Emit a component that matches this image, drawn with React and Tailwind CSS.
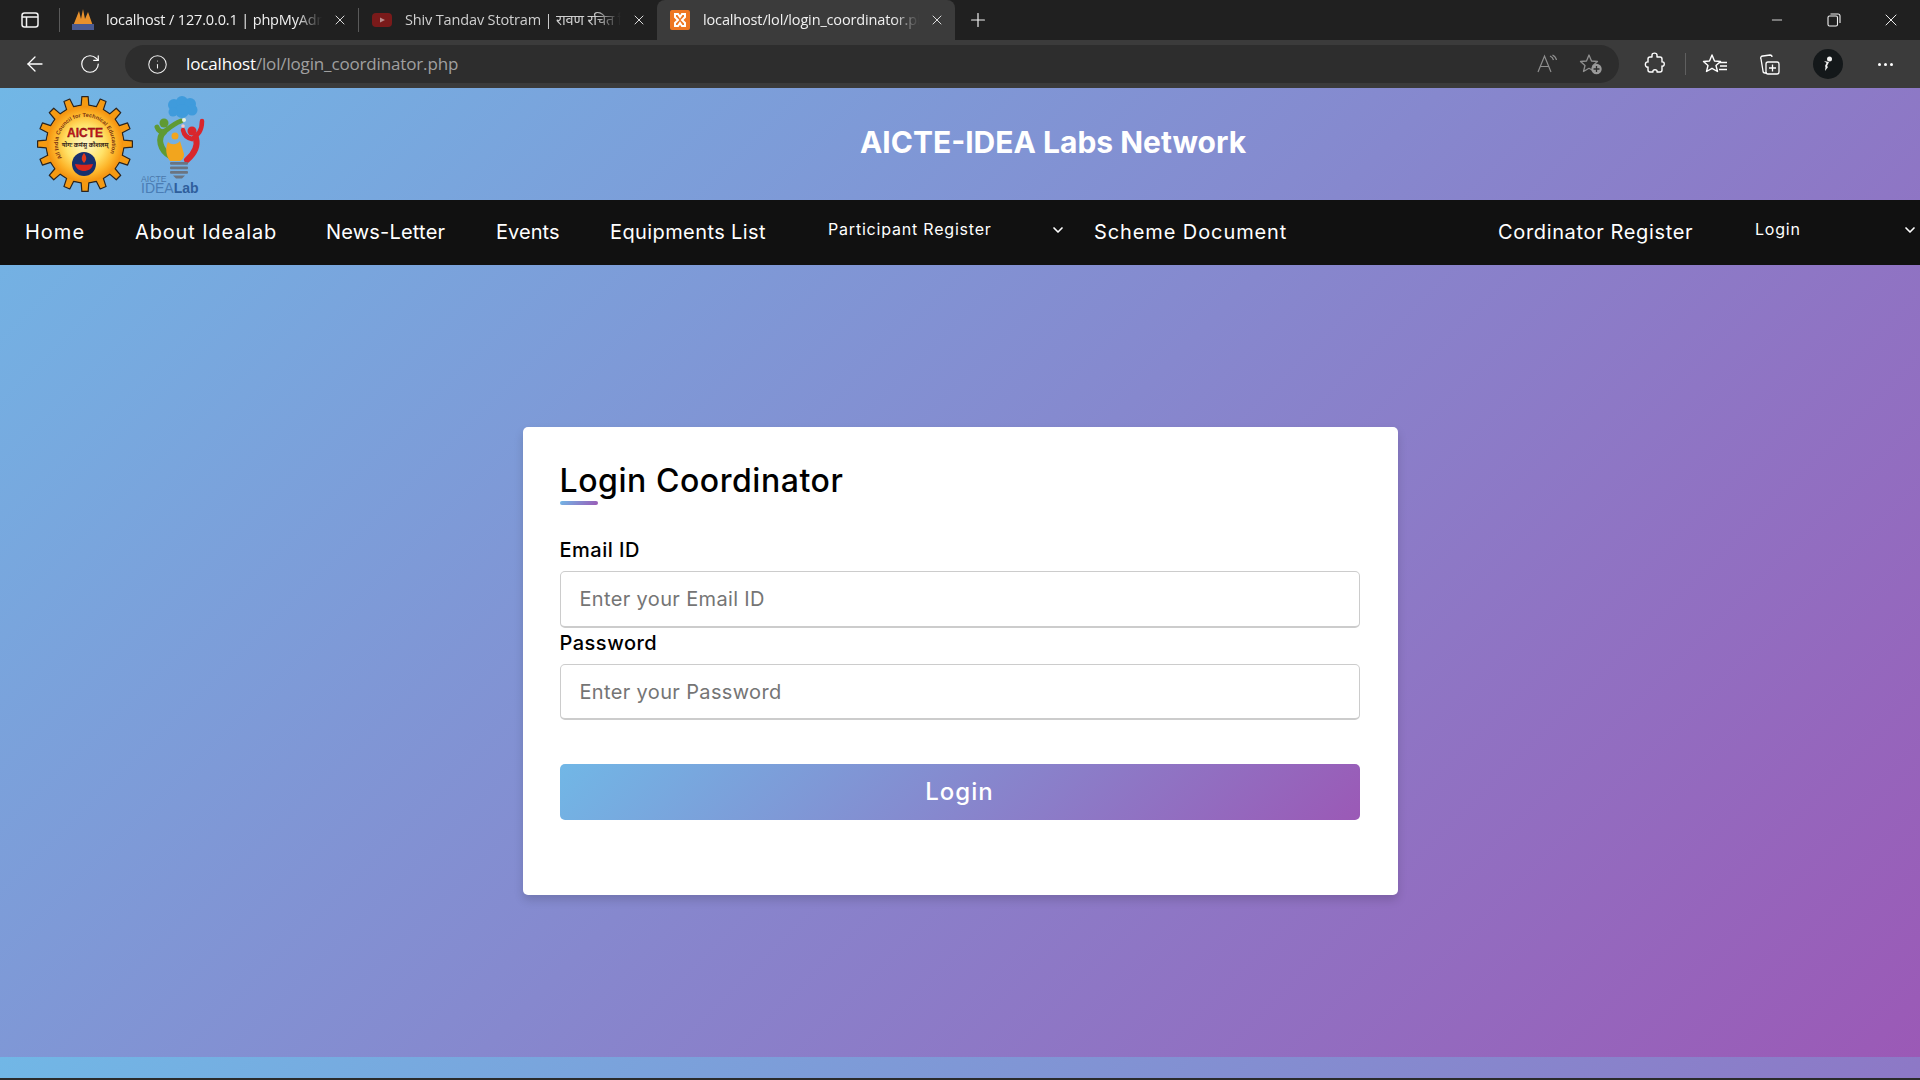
import { ArrowLeft, ChevronDown, Info, Minus, Plus, RotateCw, X } from "lucide-react";

const GRADIENT = "bg-[linear-gradient(135deg,#71b7e6,#9b59b6)]";
const BROWSER_FONT = "font-['Open_Sans','Noto_Sans',sans-serif]";

// gear outline used by the AICTE logo
function gearPath(cx, cy, outer, inner, teeth) {
  const step = (Math.PI * 2) / teeth;
  const pts = [];
  for (let i = 0; i < teeth; i++) {
    const a = i * step - Math.PI / 2;
    const w = step * 0.2;
    pts.push([a - w * 1.25, inner], [a - w * 0.85, outer], [a + w * 0.85, outer], [a + w * 1.25, inner]);
  }
  return (
    pts
      .map(([a, r], i) => `${i ? "L" : "M"}${(cx + Math.cos(a) * r).toFixed(2)} ${(cy + Math.sin(a) * r).toFixed(2)}`)
      .join(" ") + "Z"
  );
}

function AicteLogo() {
  return (
    <svg width="96" height="96" viewBox="0 0 96 96" className="shrink-0">
      <defs>
        <radialGradient id="sun" cx="50%" cy="50%" r="50%">
          <stop offset="0%" stopColor="#fff8cc" />
          <stop offset="50%" stopColor="#ffe36a" />
          <stop offset="80%" stopColor="#fdb52a" />
          <stop offset="100%" stopColor="#f4920f" />
        </radialGradient>
        <path id="ring" d="M25 62 A27 27 0 1 1 71 62" />
      </defs>
      <path d={gearPath(48, 48, 47.5, 39, 16)} fill="#f59a12" stroke="#2a2420" strokeWidth="1.2" strokeLinejoin="round" />
      <circle cx="48" cy="48" r="38" fill="url(#sun)" />
      <text fontFamily="'Liberation Sans',sans-serif" fontSize="5.6" fontWeight="700" fill="#7a3210">
        <textPath href="#ring">All India Council for Technical Education</textPath>
      </text>
      <text x="48" y="41" textAnchor="middle" fontFamily="'Liberation Sans',sans-serif" fontSize="12" fontWeight="700" fill="#c8141c" stroke="#5b0d0d" strokeWidth="0.3">AICTE</text>
      <text x="48" y="51" textAnchor="middle" fontFamily="'Noto Sans',sans-serif" fontSize="6" fontWeight="700" fill="#3a2a1a">योगः कर्मसु कौशलम्</text>
      <circle cx="47" cy="68" r="12" fill="#17306e" />
      <path d="M47 57c3 4 3 7 0 10c-3-3-3-6 0-10z" fill="#e23a1c" />
      <path d="M38 68c5 1 13 1 18 0c-1 5-5 7-9 7s-8-2-9-7z" fill="#d8261c" />
    </svg>
  );
}

function IdeaLabLogo() {
  return (
    <svg width="66" height="100" viewBox="0 0 66 100" className="shrink-0">
      <g fill="#3f9bdc">
        <circle cx="34" cy="11" r="6" />
        <circle cx="42" cy="8" r="6" />
        <circle cx="50" cy="10" r="6" />
        <circle cx="52" cy="16" r="5.500" />
        <circle cx="42" cy="17" r="7" />
        <circle cx="33" cy="18" r="4.500" />
      </g>
      <g fill="none" strokeLinecap="round">
        <path d="M41 27C33 30 28 35 24 38C20 38 18 36 17 33" stroke="#5f9a34" strokeWidth="5" />
        <path d="M24 38C17 44 20 56 30 62" stroke="#5f9a34" strokeWidth="6" />
        <path d="M62 27C62 37 58 41 52 45C47 44 44 41 43 36" stroke="#d9262c" strokeWidth="4.500" />
        <path d="M56 44C58 52 54 60 47 66" stroke="#d9262c" strokeWidth="6" />
      </g>
      <circle cx="24" cy="29" r="4.500" fill="#5f9a34" />
      <circle cx="52" cy="37" r="4.500" fill="#d9262c" />
      <path d="M28 48C32 52 38 50 40 47L44 60C44 64 42 66 40 67H30C26 62 25 54 28 48z" fill="#f2a51e" />
      <circle cx="35" cy="42" r="3.500" fill="#f2a51e" />
      <circle cx="44" cy="26" r="2" fill="#e8f3e0" />
      <circle cx="43" cy="32" r="1.800" fill="#f5c6c6" />
      <g fill="#6b7480">
        <rect x="30" y="68" width="18" height="2.800" rx="1" />
        <rect x="30" y="72.500" width="18" height="2.800" rx="1" />
        <rect x="30" y="77" width="18" height="2.800" rx="1" />
        <path d="M33 81.500h12l-3 3h-6z" />
      </g>
      <text x="1" y="88" fontFamily="'Liberation Sans',sans-serif" fontSize="8.700" fill="#4b78ab">AICTE</text>
      <text x="1" y="99" fontFamily="'Liberation Sans',sans-serif" fontSize="14" fill="#4a7db5">
        IDEA<tspan fontWeight="700" fill="#2f5f9c">Lab</tspan>
      </text>
    </svg>
  );
}

function Tab({ icon, title, width, active, textColor }) {
  return (
    <div className={`flex h-10 items-center ${width} ${active ? "rounded-t-lg bg-[#3b3b3b]" : ""}`}>
      <div className="flex w-[46px] shrink-0 justify-center">{icon}</div>
      <span className={`flex-1 overflow-hidden whitespace-nowrap text-[14.5px] tracking-[-0.15px] ${textColor} [mask-image:linear-gradient(to_right,#000_88%,transparent)]`}>
        {title}
      </span>
      <div className="flex w-[36px] shrink-0 justify-center">
        <X size={16} strokeWidth={1.4} className="text-[#e8e8e8]" />
      </div>
    </div>
  );
}

function BrowserChrome() {
  return (
    <div className={`${BROWSER_FONT} text-white`}>
      {/* ── Tab strip ───────────────────────────────── */}
      <div className="flex h-10 items-center bg-[#202020]">
        <div className="flex w-[59px] shrink-0 justify-center">
          <svg width="18" height="18" viewBox="0 0 18 18" fill="none" stroke="#f2f2f2" strokeWidth="1.5">
            <rect x="1" y="2" width="16" height="14" rx="2.5" />
            <path d="M1 6h16M5.5 6v10" />
          </svg>
        </div>
        <div className="h-[24px] w-px bg-[#5a5a5a]" />
        <Tab
          width="w-[298px]"
          textColor="text-[#f0f0f0]"
          title="localhost / 127.0.0.1 | phpMyAdmin"
          icon={
            <svg width="24" height="22" viewBox="0 0 24 22">
              <path d="M2 17L8 2l2 8 2-10 2 10 3-7 5 14z" fill="#e8912c" />
              <rect x="1" y="15" width="22" height="6" fill="#4a5a90" />
            </svg>
          }
        />
        <div className="h-[24px] w-px bg-[#5a5a5a]" />
        <Tab
          width="w-[298px]"
          textColor="text-[#cfcfcf]"
          title="Shiv Tandav Stotram | रावण रचित शिव तांडव"
          icon={
            <svg width="20" height="14" viewBox="0 0 20 14">
              <rect width="20" height="14" rx="4" fill="#7a1a1a" />
              <path d="M8 4.5l5 2.5-5 2.500z" fill="#b98a8a" />
            </svg>
          }
        />
        <Tab
          active
          width="w-[298px]"
          textColor="text-[#f0f0f0]"
          title="localhost/lol/login_coordinator.php"
          icon={
            <svg width="20" height="20" viewBox="0 0 20 20">
              <rect width="20" height="20" rx="2" fill="#ee7623" />
              <path d="M5 4h3l2 3 2-3h3v3l-3 3 3 3v3h-3l-2-3-2 3H5v-3l3-3-3-3z" fill="none" stroke="#fff" strokeWidth="2" />
            </svg>
          }
        />
        <Plus size={22} strokeWidth={1.3} className="ml-[12px] text-[#f2f2f2]" />
        <div className="ml-auto flex items-center">
          <div className="flex w-[57px] justify-center"><Minus size={16} strokeWidth={1.2} /></div>
          <div className="flex w-[57px] justify-center">
            <svg width="14" height="14" viewBox="0 0 14 14" fill="none" stroke="#f2f2f2" strokeWidth="1.1">
              <rect x="1" y="3" width="9.500" height="10" rx="1.5" />
              <path d="M3.500 1h7.500a2 2 0 0 1 2 2v7" />
            </svg>
          </div>
          <div className="flex w-[58px] justify-center"><X size={20} strokeWidth={1.1} /></div>
        </div>
      </div>

      {/* ── Address bar ─────────────────────────────── */}
      <div className="flex h-12 items-center bg-[#3b3b3b]">
        <div className="flex w-[70px] justify-center"><ArrowLeft size={24} strokeWidth={1.3} /></div>
        <div className="flex w-[40px] justify-center"><RotateCw size={22} strokeWidth={1.3} /></div>
        <div className="ml-[15px] flex h-[38px] w-[1494px] items-center rounded-full bg-[#2d2d2d]">
          <Info size={21} strokeWidth={1.2} className="ml-[22px] text-[#eeeeee]" />
          <span className="ml-[18px] whitespace-nowrap text-[17px] tracking-[-0.15px] text-[#a0a0a0]">
            <span className="text-white">localhost</span>/lol/login_coordinator.php
          </span>
          <div className="ml-auto flex items-center gap-[21px] pr-[16px] text-[#8f8f8f]">
            <svg width="21" height="20" viewBox="0 0 21 20" fill="none" stroke="currentColor" strokeWidth="1.2">
              <path d="M1 18L7.500 2L14 18M3.500 12.500h8" />
              <path d="M13 2c2 1 3 2 3.500 4M15.500 1c2 1 3.500 2.500 4 5" />
            </svg>
            <svg width="24" height="22" viewBox="0 0 24 22" fill="none" stroke="currentColor" strokeWidth="1.3">
              <path d="M10 2l2.500 6 6 .5-4.500 4 1.500 6-5.500-3.200L4.500 18.500 6 12.500 1.500 8.500l6-.5z" strokeLinejoin="round" />
              <circle cx="17.500" cy="16" r="5.200" fill="#9a9a9a" stroke="none" />
              <path d="M17.500 13v6M14.500 16h6" stroke="#2d2d2d" />
            </svg>
          </div>
        </div>
        <div className="ml-[25px] flex items-center text-white">
          <svg width="22" height="24" viewBox="0 0 22 24" fill="none" stroke="currentColor" strokeWidth="1.4">
            <path d="M8 3c0-2.500 5-2.500 5 0v2h3a2 2 0 0 1 2 2v3c3-1 3 5 0 4v4a2 2 0 0 1-2 2h-3c1-3-5-3-4 0H6a2 2 0 0 1-2-2v-3c-3.500 1-3.500-6 0-5V7a2 2 0 0 1 2-2h2z" strokeLinejoin="round" />
          </svg>
          <div className="ml-[19px] h-[22px] w-px bg-[#5f5f5f]" />
          <svg className="ml-[16px]" width="26" height="22" viewBox="0 0 26 22" fill="none" stroke="currentColor" strokeWidth="1.4">
            <path d="M10 2l2.500 6 6 .5-4.500 4 1.500 6-5.500-3.200L4.500 18.500 6 12.500 1.500 8.500l6-.5z" strokeLinejoin="round" />
            <path d="M17 9.500h8M18 13h7M17 16.500h8" />
          </svg>
          <svg className="ml-[32px]" width="20" height="21" viewBox="0 0 20 21" fill="none" stroke="currentColor" strokeWidth="1.3">
            <path d="M7 19H5a2 2 0 0 1-2-2L1 5a2 2 0 0 1 2-3l7-1a2 2 0 0 1 2 2" />
            <rect x="6" y="8" width="13" height="12" rx="2" />
            <path d="M12.500 10.500v7M9 14h7" />
          </svg>
          <div className="ml-[33px] flex h-[30px] w-[30px] items-center justify-center rounded-full bg-[#14181a]">
            <svg width="12" height="16" viewBox="0 0 12 16" fill="#f2f2f2">
              <circle cx="7.500" cy="3" r="2.500" />
              <path d="M2 5l5 1-2 4 1 1-3 4 .5-4-.5-1 1.500-3z" />
            </svg>
          </div>
          <div className="ml-[35px] flex gap-[3px]">
            <span className="h-[3px] w-[3px] rounded-full bg-white" />
            <span className="h-[3px] w-[3px] rounded-full bg-white" />
            <span className="h-[3px] w-[3px] rounded-full bg-white" />
          </div>
        </div>
      </div>
    </div>
  );
}

function NavLink({ width, tracking, children }) {
  return <a className={`${width} ${tracking} shrink-0 -translate-y-px whitespace-nowrap text-[20px] text-white`}>{children}</a>;
}

function NavDropdown({ width, label, chevronClass }) {
  return (
    <div className={`${width} flex shrink-0 items-center -translate-y-[4px] text-white`}>
      <span className="whitespace-nowrap text-[16px] tracking-[0.8px]">{label}</span>
      <ChevronDown size={16} strokeWidth={2.5} className={`${chevronClass} translate-y-px`} />
    </div>
  );
}

function Field({ label, placeholder, type, inputHeight }) {
  return (
    <div>
      <label className="mb-[6px] block text-[20px] font-medium leading-[30px] tracking-[0.5px] text-black">{label}</label>
      <input
        type={type}
        placeholder={placeholder}
        className={`${inputHeight} block w-full rounded-[5px] border border-b-2 border-[#cccccc] pl-[19px] text-[20px] tracking-[0.35px] text-black placeholder:text-[#757575] outline-none`}
      />
    </div>
  );
}

export default function App() {
  return (
    <div className="flex h-[1080px] flex-col overflow-hidden bg-[#2b2b2b] font-['Inter',sans-serif]">
      <BrowserChrome />

      {/* body gradient spans header to card area, then repeats below the fold */}
      <div className={`h-[990px] shrink-0 bg-[length:100%_969px] ${GRADIENT}`}>
        {/* ── Site header ─────────────────────────────── */}
        <header className="flex h-[112px] items-center pl-[37px]">
          <div className="flex w-[149px] shrink-0 items-center gap-[7px]">
            <AicteLogo />
            <IdeaLabLogo />
          </div>
          <h1 className="flex-1 -translate-y-[2px] text-center text-[30px] font-bold text-white">
            AICTE-IDEA Labs Network
          </h1>
        </header>

        {/* ── Nav ─────────────────────────────────────── */}
        <nav className="flex h-[65px] items-center bg-[#111111] pl-[25px]">
          <NavLink width="w-[110px]" tracking="tracking-[1px]">Home</NavLink>
          <NavLink width="w-[191px]" tracking="tracking-[0.85px]">About Idealab</NavLink>
          <NavLink width="w-[170px]" tracking="tracking-[0.2px]">News-Letter</NavLink>
          <NavLink width="w-[114px]" tracking="tracking-[0.05px]">Events</NavLink>
          <NavLink width="w-[218px]" tracking="tracking-[0.4px]">Equipments List</NavLink>
          <NavDropdown width="w-[266px]" label="Participant Register" chevronClass="ml-[58px]" />
          <NavLink width="w-[404px]" tracking="tracking-[0.9px]">Scheme Document</NavLink>
          <NavLink width="w-[257px]" tracking="tracking-[0.65px]">Cordinator Register</NavLink>
          <NavDropdown width="w-[165px]" label="Login" chevronClass="ml-[101px]" />
        </nav>

        {/* ── Login card ──────────────────────────────── */}
        <main className="flex h-[792px] items-center justify-center">
          <div className="h-[468px] w-[875px] rounded-[5px] bg-white pl-[37px] pr-[38px] pt-[29px] shadow-[0_5px_10px_rgba(0,0,0,0.15)]">
            <div className="relative mb-[29px] h-[50px]">
              <h2 className="text-[32px] font-medium leading-[50px] tracking-[0.55px] text-black">Login Coordinator</h2>
              <span className={`absolute bottom-px left-0 h-[4px] w-[38px] rounded-full ${GRADIENT}`} />
            </div>
            <div>
              <Field label="Email ID" placeholder="Enter your Email ID" type="email" inputHeight="h-[57px]" />
              <Field label="Password" placeholder="Enter your Password" type="password" inputHeight="h-[56px]" />
            </div>
            <button className={`mt-[44px] block h-[56px] w-full rounded-[5px] text-[24px] font-medium tracking-[1px] text-white ${GRADIENT}`}>
              Login
            </button>
          </div>
        </main>
      </div>
    </div>
  );
}
